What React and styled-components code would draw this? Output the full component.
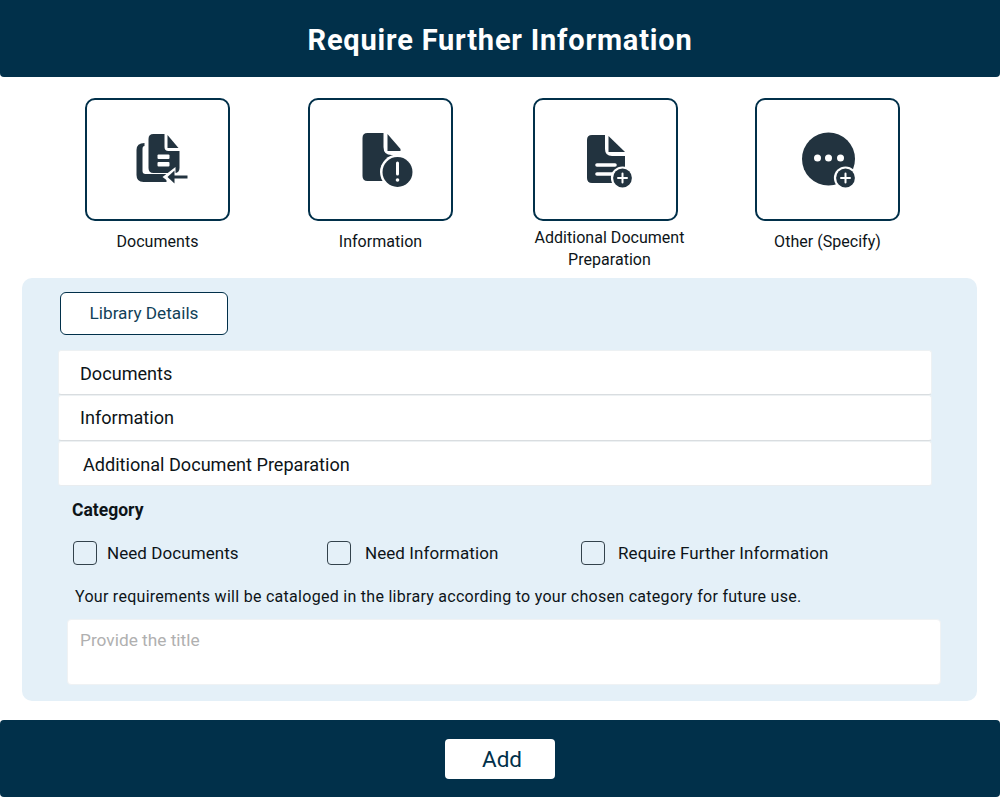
import styled, { createGlobalStyle } from "styled-components";

const navy = "#01304a";
const ink = "#22333f";

const GlobalStyle = createGlobalStyle`
  * {
    box-sizing: border-box;
  }
  html, body {
    margin: 0;
    background: #fff;
    font-family: Roboto, "Liberation Sans", sans-serif;
    color: #0d1418;
  }
`;

function PlusBadge({ cx, cy }) {
  return (
    <>
      <circle cx={cx} cy={cy} r="11.6" fill="#fff" />
      <circle cx={cx} cy={cy} r="9.4" fill={ink} />
      <path d={`M${cx - 4.5} ${cy}h9M${cx} ${cy - 4.5}v9`} stroke="#fff" strokeWidth="2" strokeLinecap="round" />
    </>
  );
}

function DocumentsIcon() {
  return (
    <svg width="80" height="80" viewBox="-2.5 0 80 80">
      <path d="M24 23v3q-2 0-2 3v22q0 3 3 3h21v8H23q-7 0-7-7V30q0-7 8-7z" fill={ink} />
      <path d="M33 14h11v13q0 4 4 4h11v17q0 5-5 5H33q-5 0-5-5V19q0-5 5-5z" fill={ink} />
      <path d="M47 15l11 13H47z" fill={ink} />
      <rect x="37" y="34.5" width="12" height="4.5" rx="1" fill="#fff" />
      <rect x="37" y="42" width="12" height="4.5" rx="1" fill="#fff" />
      <path d="M42 57l13-10v20z" fill="#fff" />
      <path d="M47 57l7-6.5v13z" fill={ink} />
      <path d="M52 57h15" stroke={ink} strokeWidth="3" />
    </svg>
  );
}

function InformationIcon() {
  return (
    <svg width="80" height="80" viewBox="-4.5 0 80 80">
      <path d="M22 13h16v14q0 8 8 8h9v26H22q-5 0-5-5V18q0-5 5-5z" fill={ink} />
      <path d="M42 14l13 15v2H42z" fill={ink} />
      <circle cx="52" cy="52" r="17.5" fill="#fff" />
      <circle cx="52" cy="52" r="15" fill={ink} />
      <path d="M52 43v11" stroke="#fff" strokeWidth="3" strokeLinecap="round" />
      <circle cx="52" cy="60" r="1.8" fill="#fff" />
    </svg>
  );
}

function PreparationIcon() {
  return (
    <svg width="80" height="80" viewBox="-5 0 80 80">
      <path d="M21 15h13v14q0 7 7 7h13v27H21q-5 0-5-5V20q0-5 5-5z" fill={ink} />
      <path d="M37.5 16l16.5 16H37.5z" fill={ink} />
      <path d="M26 45h18M26 54h16" stroke="#fff" strokeWidth="3.6" strokeLinecap="round" />
      <PlusBadge cx={51.5} cy={58} />
    </svg>
  );
}

function OtherIcon() {
  return (
    <svg width="80" height="80" viewBox="-2.5 0 80 80">
      <circle cx="38" cy="39" r="26.5" fill={ink} />
      <circle cx="27" cy="38" r="3.5" fill="#fff" />
      <circle cx="38" cy="38" r="3.5" fill="#fff" />
      <circle cx="50" cy="38" r="3.5" fill="#fff" />
      <PlusBadge cx={55} cy={58} />
    </svg>
  );
}

const options = [
  { label: "Documents", Icon: DocumentsIcon },
  { label: "Information", Icon: InformationIcon },
  { label: "Additional Document Preparation", Icon: PreparationIcon, wide: true },
  { label: "Other (Specify)", Icon: OtherIcon },
];

const rows = [
  { label: "Documents", inset: 21, drop: 2, line: "#d9dde0" },
  { label: "Information", inset: 21, drop: 0, line: "#d9dde0" },
  { label: "Additional Document Preparation", inset: 24, drop: 2, line: "#e9edf0" },
];

const categories = [
  { label: "Need Documents", gap: 10 },
  { label: "Need Information", gap: 14 },
  { label: "Require Further Information", gap: 13 },
];

export default function App() {
  return (
    <Page>
      <GlobalStyle />
      <Header>Require Further Information</Header>
      <Options>
        {options.map(({ label, Icon, wide }) => (
          <Option key={label}>
            <Tile>
              <Icon />
            </Tile>
            <OptionLabel $wide={wide}>{label}</OptionLabel>
          </Option>
        ))}
      </Options>
      <Panel>
        <TabButton>Library Details</TabButton>
        <RowList>
          {rows.map(({ label, inset, drop, line }) => (
            <Row key={label} $inset={inset} $drop={drop} $line={line}>
              {label}
            </Row>
          ))}
        </RowList>
        <CategoryTitle>Category</CategoryTitle>
        <CheckRow>
          {categories.map(({ label, gap }) => (
            <Check key={label} $gap={gap}>
              <Box />
              {label}
            </Check>
          ))}
        </CheckRow>
        <Note>Your requirements will be cataloged in the library according to your chosen category for future use.</Note>
        <TitleInput placeholder="Provide the title" />
      </Panel>
      <Footer>
        <AddButton>Add</AddButton>
      </Footer>
    </Page>
  );
}

const Page = styled.div`
  width: 1000px;
  height: 800px;
  display: flex;
  flex-direction: column;
  overflow: hidden;
`;

const Header = styled.div`
  height: 77px;
  padding-top: 2px;
  background: ${navy};
  border-radius: 0 0 4px 4px;
  color: #fff;
  font-size: 29px;
  font-weight: 700;
  letter-spacing: 0.8px;
  display: flex;
  align-items: center;
  justify-content: center;
`;

const Options = styled.div`
  height: 201px;
  padding: 21px 0 0 85px;
  display: grid;
  grid-template-columns: 223px 225px 222px 145px;
`;

const Option = styled.div`
  width: 145px;
  display: flex;
  flex-direction: column;
  align-items: center;
`;

const Tile = styled.div`
  width: 145px;
  height: 123px;
  border: 2px solid ${navy};
  border-radius: 10px;
  display: flex;
  align-items: center;
  justify-content: center;
`;

const OptionLabel = styled.div`
  width: ${(p) => (p.$wide ? "170px" : "auto")};
  margin-top: ${(p) => (p.$wide ? "6px" : "10px")};
  margin-left: ${(p) => (p.$wide ? "8px" : "0")};
  flex: none;
  font-size: 16px;
  letter-spacing: 0.03px;
  line-height: 22px;
  text-align: center;
`;

const Panel = styled.div`
  width: 955px;
  height: 423px;
  margin-left: 22px;
  padding: 14px 0 0 36px;
  background: #e4f0f8;
  border-radius: 10px;
`;

const TabButton = styled.button`
  display: block;
  width: 168px;
  height: 43px;
  margin-left: 2px;
  padding-bottom: 3px;
  background: #fff;
  border: 1px solid ${navy};
  border-radius: 6px;
  color: #123f58;
  font-family: inherit;
  font-size: 17.2px;
`;

const RowList = styled.div`
  width: 874px;
  margin-top: 15px;
  display: flex;
  flex-direction: column;
`;

const Row = styled.div`
  height: 45.4px;
  padding: ${(p) => p.$drop}px 0 0 ${(p) => p.$inset}px;
  background: #fff;
  border: 1px solid #edf1f3;
  border-bottom: 1.5px solid ${(p) => p.$line};
  border-radius: 3px;
  font-size: 18.1px;
  display: flex;
  align-items: center;
  &:nth-child(2) {
    padding-bottom: 2px;
  }
`;

const CategoryTitle = styled.div`
  margin: 14px 0 0 14px;
  font-size: 17.5px;
  line-height: 20px;
  font-weight: 700;
`;

const CheckRow = styled.div`
  margin: 20px 0 0 15px;
  display: grid;
  grid-template-columns: 254px 254px auto;
`;

const Check = styled.label`
  display: flex;
  align-items: center;
  gap: ${(p) => p.$gap}px;
  font-size: 17px;
  letter-spacing: 0.07px;
  line-height: 24px;
`;

const Box = styled.span`
  width: 24px;
  height: 24px;
  margin-top: 1px;
  border: 1.5px solid #33424c;
  border-radius: 4px;
`;

const Note = styled.div`
  margin: 20px 0 0 17px;
  font-size: 16px;
  letter-spacing: 0.28px;
  line-height: 24px;
`;

const TitleInput = styled.textarea`
  display: block;
  width: 874px;
  height: 66px;
  margin: 10px 0 0 9px;
  padding: 10px 12px;
  background: #fff;
  border: 1px solid #eff2f4;
  border-radius: 4px;
  outline: none;
  resize: none;
  font-family: inherit;
  font-size: 17.3px;
  line-height: 20px;
  &::placeholder {
    color: #b0b0b0;
  }
`;

const Footer = styled.div`
  height: 77px;
  margin-top: 19px;
  background: ${navy};
  border-radius: 4px;
  display: flex;
  align-items: center;
  justify-content: center;
`;

const AddButton = styled.button`
  width: 110px;
  height: 40px;
  padding-left: 10px;
  background: #fff;
  border: 0;
  border-radius: 4px;
  color: ${navy};
  font-family: inherit;
  font-size: 22.5px;
`;
